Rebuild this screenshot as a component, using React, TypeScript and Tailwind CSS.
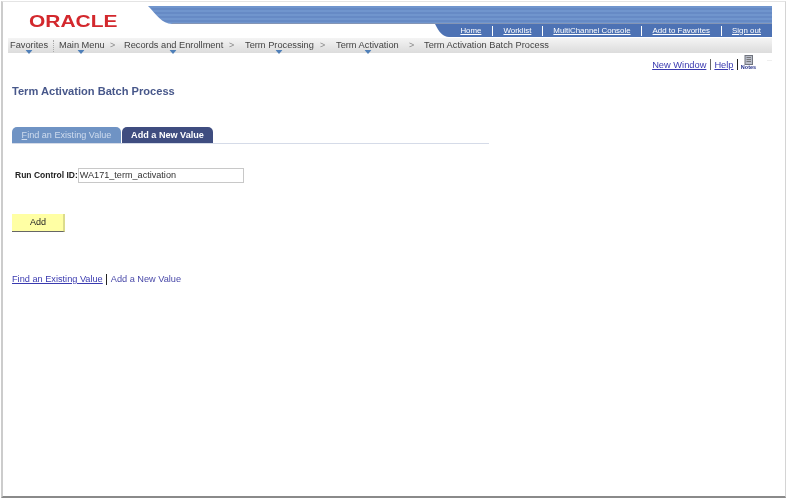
const sans = "font-['Liberation_Sans',Arial,sans-serif]";

function Caret() {
  return (
    <svg width="7" height="4" viewBox="0 0 7 4" className="absolute left-1/2 -bottom-[2px] -translate-x-1/2">
      <path d="M0 0h7L3.500 4z" fill="#4f7fb8" />
    </svg>
  );
}

function Crumb({ children, caret = true, w }: { children: string; caret?: boolean; w: string }) {
  return (
    <span className={`relative block whitespace-nowrap ${w}`}>
      {children}
      {caret && <Caret />}
    </span>
  );
}

function Sep({ w }: { w: string }) {
  return <span className={`block text-[9px] text-[#888] ${w}`}>&gt;</span>;
}

function TopLink({ children }: { children: string }) {
  return <a className="underline text-white text-[7.900px] whitespace-nowrap">{children}</a>;
}

function Bar() {
  return <span className="w-px h-[10px] bg-white" />;
}

function NotesIcon() {
  return (
    <div className="flex flex-col items-center w-[14px] -mt-[4px]">
      <svg width="11" height="10" viewBox="0 0 11 10">
        <rect x="2" y="0.500" width="7.500" height="9" fill="#b9bdc9" stroke="#70747e" strokeWidth="1" />
        <path d="M3.500 2.500h4.500M3.500 4.500h4.500M3.500 6.500h4.500" stroke="#666" strokeWidth="0.800" />
      </svg>
      <span className="text-[5.500px] leading-[5px] font-bold text-[#24308a]">Notes</span>
    </div>
  );
}

export default function App() {
  return (
    <div className={`w-[787px] h-[500px] bg-white overflow-hidden blur-[0.3px] ${sans}`}>
      <div className="ml-px mt-px w-[785px] h-[497px] border-l-2 border-t border-r border-b-2 border-l-[#cccccc] border-t-[#e4e4e4] border-r-[#d4d4d4] border-b-[#8a8a8a] flex flex-col">
        <header className="flex h-[36px] pt-[4px] pr-[13px]">
          <div className="w-[145px] pl-[26px] pt-[8px] shrink-0">
            <span className="block text-[#d3282d] text-[16.500px] leading-[15px] font-bold scale-x-[1.270] origin-left">ORACLE</span>
          </div>
          <div className="flex-1 min-w-0 flex flex-col">
            <div className="flex h-[18px]">
              <svg width="26" height="18" viewBox="0 0 26 18" className="shrink-0">
                <defs>
                  <pattern id="stripes" width="4" height="4" patternUnits="userSpaceOnUse">
                    <rect width="4" height="2" fill="#7095cd" />
                    <rect y="2" width="4" height="2" fill="#668ac5" />
                  </pattern>
                </defs>
                <path d="M0 0H26V18H24C14 18 8 8 0 0z" fill="url(#stripes)" />
                <path d="M24 17.500H26" stroke="#8495b5" strokeWidth="1" />
              </svg>
              <div className="flex-1 bg-[repeating-linear-gradient(180deg,#7095cd_0,#7095cd_2px,#668ac5_2px,#668ac5_4px)] border-b border-b-[#8495b5]" />
            </div>
            <div className="flex h-[13px]">
              <div className="w-[287px] shrink-0" />
              <svg width="20" height="13" viewBox="0 0 20 13" className="shrink-0">
                <path d="M0 0H20V13H14C8 13 4 8 0 0z" fill="#4d72b4" />
              </svg>
              <nav className="flex-1 bg-[#4d72b4] flex items-center gap-[10.500px] justify-end pr-[11px]">
                <TopLink>Home</TopLink>
                <Bar />
                <TopLink>Worklist</TopLink>
                <Bar />
                <TopLink>MultiChannel Console</TopLink>
                <Bar />
                <TopLink>Add to Favorites</TopLink>
                <Bar />
                <TopLink>Sign out</TopLink>
              </nav>
            </div>
          </div>
        </header>
        <div className="ml-[5px] mr-[13px] h-[15px] bg-linear-to-b from-[#f4f4f4] to-[#dcdcdc] flex items-center pl-[2px] text-[9.250px] text-[#444]">
          <Crumb w="w-[37px]">Favorites</Crumb>
          <span className="ml-[6px] mr-[5px] h-[12px] border-l border-dotted border-[#aaa]" />
          <Crumb w="w-[43px]">Main Menu</Crumb>
          <span className="w-[8px]" />
          <Sep w="w-[14px]" />
          <Crumb w="w-[97px]">Records and Enrollment</Crumb>
          <span className="w-[8px]" />
          <Sep w="w-[16px]" />
          <Crumb w="w-[67px]">Term Processing</Crumb>
          <span className="w-[8px]" />
          <Sep w="w-[16px]" />
          <Crumb w="w-[64px]">Term Activation</Crumb>
          <span className="w-[9px]" />
          <Sep w="w-[15px]" />
          <Crumb w="w-[126px]" caret={false}>Term Activation Batch Process</Crumb>
        </div>
        <div className="flex justify-end items-start gap-[3.500px] h-[21px] pr-[13px] pt-[6px] text-[9.300px] text-[#3a3ab0]">
          <a className="underline">New Window</a>
          <span className="w-px h-[11px] bg-[#666]" />
          <a className="underline">Help</a>
          <span className="w-px h-[11px] bg-[#222]" />
          <NotesIcon />
          <span className="w-[5px] h-px ml-[8px] mt-[1px] bg-[#efefef]" />
        </div>
        <h1 className="ml-[9px] mt-[11px] text-[11.100px] leading-[13px] font-bold text-[#47578a]">Term Activation Batch Process</h1>
        <div className="ml-[9px] mt-[30px] w-[477px] flex items-end gap-px border-b border-[#d5dbe8] h-[16px] text-[9.100px]">
          <div className="w-[109px] h-[16px] pt-px rounded-t-[5px] bg-[#6f93c4] text-[#cfdcee] flex items-center justify-center">
            <span><span className="underline">F</span>ind an Existing Value</span>
          </div>
          <div className="w-[91px] h-[16px] pt-px rounded-t-[5px] bg-[#3f4d80] text-white font-bold flex items-center justify-center">
            Add a New Value
          </div>
        </div>
        <div className="ml-[12px] mt-[24px] flex items-center">
          <label className="text-[8.500px] font-bold text-[#222]">Run Control ID:</label>
          <div className="w-[166px] h-[15px] border border-[#c8c8c8] flex items-center pl-px text-[9.100px] text-[#333]">WA171_term_activation</div>
        </div>
        <button className="ml-[9px] mt-[31px] w-[53px] h-[18px] bg-[#ffffa4] border-r-2 border-b border-r-[#dcdc8c] border-b-[#666] text-[9px] text-[#222] pl-px">Add</button>
        <div className="ml-[9px] mt-[41px] flex items-center gap-[3.500px] text-[9.200px]">
          <a className="underline text-[#3a3ab0]">Find an Existing Value</a>
          <span className="w-px h-[11px] bg-[#222]" />
          <span className="text-[#4848a8]">Add a New Value</span>
        </div>
      </div>
    </div>
  );
}
